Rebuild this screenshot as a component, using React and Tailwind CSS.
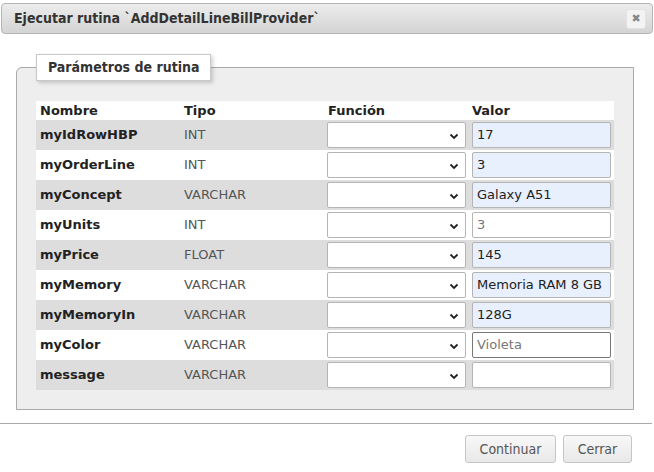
import React from 'react';

const rows = [
  { name: 'myIdRowHBP', type: 'INT', value: '17', filled: true },
  { name: 'myOrderLine', type: 'INT', value: '3', filled: true },
  { name: 'myConcept', type: 'VARCHAR', value: 'Galaxy A51', filled: true },
  { name: 'myUnits', type: 'INT', value: '3', filled: false },
  { name: 'myPrice', type: 'FLOAT', value: '145', filled: true },
  { name: 'myMemory', type: 'VARCHAR', value: 'Memoria RAM 8 GB', filled: true },
  { name: 'myMemoryIn', type: 'VARCHAR', value: '128G', filled: true },
  { name: 'myColor', type: 'VARCHAR', value: 'Violeta', filled: false, focus: true },
  { name: 'message', type: 'VARCHAR', value: '', filled: false },
];

const Chevron = () => (
  <svg width="10" height="7" viewBox="0 0 10 7" className="absolute right-[6px] top-[10px]">
    <path d="M1.5 1.5 L5 5 L8.5 1.5" fill="none" stroke="#222" strokeWidth="1.8" />
  </svg>
);

const App = () => {
  return (
    <div className="w-[654px] h-[472px] bg-white relative overflow-hidden font-['DejaVu_Sans',Verdana,sans-serif] text-[13px] text-[#222]">
      {/* Title bar */}
      <div className="mt-[3px] mx-[1px] h-[31px] rounded-[4px] border border-[#b5b5b5] bg-gradient-to-b from-[#ececec] to-[#d4d4d4] flex items-center justify-between pl-[12px] pr-[6px]">
        <span className="font-['DejaVu_Sans_Condensed','DejaVu_Sans',sans-serif] font-bold text-[14px] text-[#333]">
          Ejecutar rutina `AddDetailLineBillProvider`
        </span>
        <button className="w-[20px] h-[20px] rounded-[3px] border border-[#e2e2e2] bg-[#f3f3f3] flex items-center justify-center text-[#888] text-[11px] leading-none">
          ✖
        </button>
      </div>

      {/* Fieldset */}
      <div className="px-[16px] pt-[20px]">
        <fieldset className="w-[618px] border border-[#aaaaaa] rounded-tl-[6px] bg-[#eeeeee] pl-[19px] pr-[19px] pt-[20px] pb-[19px]">
          <legend className="bg-white border border-[#c8c8c8] shadow-[2px_2px_4px_rgba(0,0,0,0.18)] h-[27px] px-[11px] flex items-center font-['DejaVu_Sans_Condensed','DejaVu_Sans',sans-serif] font-bold text-[14px] text-[#333]">
            Parámetros de rutina
          </legend>
          <div className="bg-white w-[578px]">
            <div className="grid grid-cols-[144px_144px_144px_146px] h-[19px] pb-[2px] items-center font-bold">
              <div className="pl-[4px]">Nombre</div>
              <div className="pl-[4px]">Tipo</div>
              <div className="pl-[4px]">Función</div>
              <div className="pl-[4px]">Valor</div>
            </div>
            {rows.map((r, i) => (
              <div
                key={r.name}
                className={`grid grid-cols-[144px_144px_144px_146px] h-[30px] items-center ${i % 2 === 0 ? 'bg-[#dddddd]' : 'bg-white'}`}
              >
                <div className="pl-[4px] font-bold text-[#222]">{r.name}</div>
                <div className="pl-[4px] text-[#555]">{r.type}</div>
                <div className="pl-[3px]">
                  <div className="relative w-[139px] h-[26px] bg-white border border-[#b5b5b5] rounded-[2px]">
                    <Chevron />
                  </div>
                </div>
                <div className="pl-[4px]">
                  <div
                    className={`w-[139px] h-[26px] rounded-[2px] flex items-center pl-[4px] whitespace-nowrap overflow-hidden ${
                      r.filled
                        ? 'bg-[#e8f0fe] border border-[#b5b5b5] text-[#222]'
                        : r.focus
                        ? 'bg-white border border-[#777777] text-[#777]'
                        : 'bg-white border border-[#b5b5b5] text-[#777]'
                    }`}
                  >
                    {r.value}
                  </div>
                </div>
              </div>
            ))}
          </div>
        </fieldset>
      </div>

      {/* Footer */}
      <div className="mt-[13px] border-t border-[#aaaaaa] mr-[2px]" />
      <div className="flex justify-end gap-[7px] pr-[22px] pt-[11px] font-['DejaVu_Sans_Condensed','DejaVu_Sans',sans-serif] text-[14px]">
        <button className="w-[91px] h-[28px] rounded-[3px] border border-[#c5c5c5] bg-gradient-to-b from-[#f8f8f8] to-[#e8e8e8] text-[#555]">
          Continuar
        </button>
        <button className="w-[69px] h-[28px] rounded-[3px] border border-[#c5c5c5] bg-gradient-to-b from-[#f8f8f8] to-[#e8e8e8] text-[#555]">
          Cerrar
        </button>
      </div>
    </div>
  );
};

export default App;
